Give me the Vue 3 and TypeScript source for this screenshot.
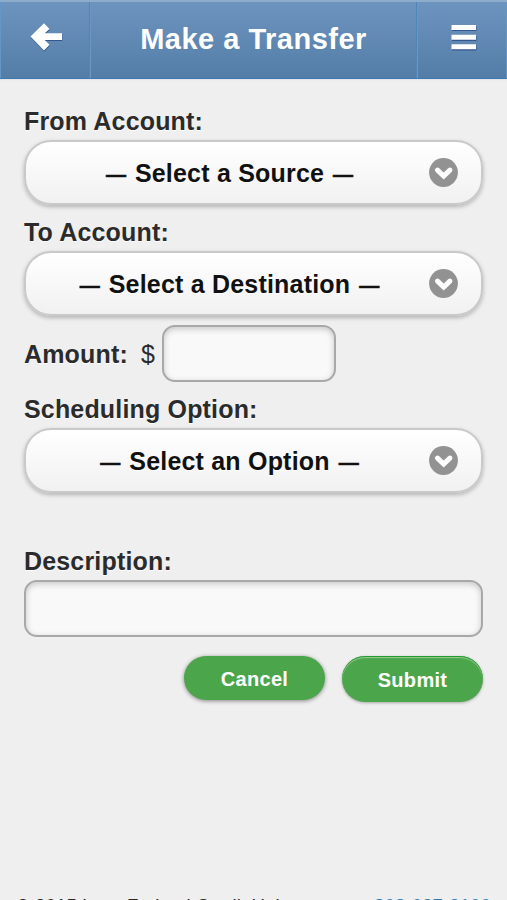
<script setup lang="ts">
interface SelectField {
  label: string
  text: string
}

const accounts: SelectField[] = [
  { label: 'From Account:', text: 'Select a Source' },
  { label: 'To Account:', text: 'Select a Destination' },
]
const scheduling: SelectField = { label: 'Scheduling Option:', text: 'Select an Option' }
</script>

<template>
  <div class="page">
    <header class="header">
      <button class="nav back" aria-label="Back">
        <svg width="34" height="30" viewBox="0 0 34 30">
          <path class="icon-shadow" d="M1.5 14.5 15 1.2 20.5 7 15.8 11.3H33V18H15.8L20.5 22.8 15 28.5Z" transform="translate(.3 1)" />
          <path class="icon-fill" d="M1.5 14.5 15 1.2 20.5 7 15.8 11.3H33V18H15.8L20.5 22.8 15 28.5Z" />
        </svg>
      </button>
      <h1>Make a Transfer</h1>
      <button class="nav menu" aria-label="Menu">
        <svg width="26" height="28" viewBox="0 0 26 28">
          <path class="icon-shadow" d="M1 2H25.5V7H1ZM1 12H25.5V17H1ZM1 21H25.5V26.5H1Z" />
          <path class="icon-fill" d="M.5 1H25V6H.5ZM.5 10.7H25V15.7H.5ZM.5 20.2H25V25.2H.5Z" />
        </svg>
      </button>
    </header>

    <main class="form">
      <div v-for="field in accounts" :key="field.label" class="field">
        <label>{{ field.label }}</label>
        <button class="select">
          <span class="value"><span class="dash">—</span>{{ field.text }}<span class="dash">—</span></span>
          <svg class="chevron" width="29" height="29" viewBox="0 0 29 29">
            <circle cx="14.5" cy="14.5" r="14.4" />
            <path d="M8.5 12.1 14.7 18.1 20.9 12.1" />
          </svg>
        </button>
      </div>

      <div class="amount">
        <label>Amount:</label>
        <span class="currency">$</span>
        <input type="text" aria-label="Amount" />
      </div>

      <div class="field">
        <label>{{ scheduling.label }}</label>
        <button class="select">
          <span class="value"><span class="dash">—</span>{{ scheduling.text }}<span class="dash">—</span></span>
          <svg class="chevron" width="29" height="29" viewBox="0 0 29 29">
            <circle cx="14.5" cy="14.5" r="14.4" />
            <path d="M8.5 12.1 14.7 18.1 20.9 12.1" />
          </svg>
        </button>
      </div>

      <div class="field description">
        <label>Description:</label>
        <input type="text" aria-label="Description" />
      </div>

      <div class="actions">
        <button class="cancel">Cancel</button>
        <button class="submit">Submit</button>
      </div>
    </main>

    <footer class="footer">
      <span class="copyright">© 2015 Iowa Federal Credit Union</span>
      <a>808-627-3100</a>
    </footer>
  </div>
</template>

<style>
body {
  background: #efefef;
  overflow: hidden;
}
</style>

<style scoped>
.page {
  display: flex;
  flex-direction: column;
  box-sizing: border-box;
  height: 900px;
  overflow: hidden;
  background: #efefef;
  color: #2b2b2b;
  font-family: "Liberation Sans", Arial, sans-serif;
}

button,
input {
  box-sizing: border-box;
  margin: 0;
  font-family: inherit;
}

.header {
  display: grid;
  grid-template-columns: 90px 1fr 91px;
  flex: none;
  box-sizing: border-box;
  height: 79px;
  border-top: 2px solid #8eadcc;
  border-bottom: 1px solid #3e7ab3;
  background: linear-gradient(#6d94bf, #537da6);
  box-shadow: 0 1px 1px #e2e5e8;
}

.nav {
  display: flex;
  align-items: flex-start;
  padding: 0;
  border: 0;
  background: none;
}

.back {
  padding: 20px 0 0 28px;
  border-left: 1px solid #6497c8;
  border-right: 1px solid #5085b9;
  box-shadow: 1px 0 #6b98c3;
}

.menu {
  padding: 22px 0 0 34px;
  border-left: 1px solid #5085b9;
  border-right: 1px solid #6497c8;
  box-shadow: inset 1px 0 #6b98c3;
}

.icon-shadow {
  fill: #32578f;
}

.icon-fill {
  fill: #fff;
}

h1 {
  margin: 0;
  padding: 1px 0 0 1px;
  color: #fff;
  font-size: 29px;
  line-height: 72px;
  letter-spacing: 0.5px;
  text-align: center;
  white-space: nowrap;
}

.form {
  display: flex;
  flex-direction: column;
  padding: 25px 24px 0;
}

.field {
  display: flex;
  flex-direction: column;
  margin-bottom: 10px;
}

label {
  height: 36px;
  font-size: 25px;
  font-weight: bold;
  line-height: 35px;
  letter-spacing: 0.17px;
  text-shadow: 0 1px 0 #fff;
  white-space: nowrap;
}

.select {
  display: grid;
  grid-template-columns: 1fr 29px;
  align-items: center;
  height: 65px;
  padding: 2px 23px 0 4px;
  border: 2px solid #c9c9c9;
  border-radius: 27px;
  background: linear-gradient(#fff, #f1f1f1);
  box-shadow: 0 2px 4px rgba(0, 0, 0, 0.25);
  color: #111;
  font-size: 25px;
  font-weight: bold;
  text-shadow: 0 1px 0 #fff;
  white-space: nowrap;
}

.value {
  display: flex;
  justify-content: center;
  align-items: center;
  gap: 9px;
  letter-spacing: 0.2px;
}

.dash {
  padding-top: 1px;
  font-size: 20px;
  letter-spacing: 0;
  -webkit-text-stroke: 0.6px #111;
}

.chevron {
  margin-top: -2px;
}

.chevron circle {
  fill: #929292;
}

.chevron path {
  fill: none;
  stroke: #fff;
  stroke-width: 5;
  stroke-linecap: round;
}

input {
  height: 57px;
  border: 2px solid #a8a8a8;
  border-radius: 13px;
  background: #f9f9f9;
  box-shadow: inset 0 2px 6px rgba(0, 0, 0, 0.2);
  outline: none;
}

.amount {
  display: flex;
  align-items: center;
  height: 57px;
  margin: -1px 0 10px;
}

.amount label {
  line-height: 37px;
}

.currency {
  width: 21px;
  margin-left: 13px;
  padding-top: 1px;
  font-size: 25px;
}

.amount input {
  width: 174px;
}

.description {
  margin: 41px 0 0;
}

.actions {
  display: flex;
  justify-content: flex-end;
  gap: 17px;
  padding-top: 19px;
}

.actions button {
  width: 141px;
  padding: 0;
  border: 0;
  border-radius: 23px;
  background: #4ba54b;
  color: #fff;
  font-size: 20px;
  font-weight: bold;
  letter-spacing: 0.3px;
}

.actions .cancel {
  height: 44px;
  padding-top: 2px;
  box-shadow: 0 1px 4px rgba(0, 0, 0, 0.45);
}

.actions .submit {
  height: 46px;
  padding-top: 2px;
  box-shadow: inset 0 1px #22992a, inset 0 2px 1px #98cc98, 0 1px 3px rgba(0, 0, 0, 0.3);
}

.footer {
  display: flex;
  justify-content: space-between;
  flex: none;
  height: 4px;
  margin-top: auto;
  padding: 0 16px;
  overflow: hidden;
  font-size: 18.6px;
  line-height: 19px;
  letter-spacing: 0.1px;
  white-space: nowrap;
}

.footer a {
  color: #2c80bc;
}
</style>
